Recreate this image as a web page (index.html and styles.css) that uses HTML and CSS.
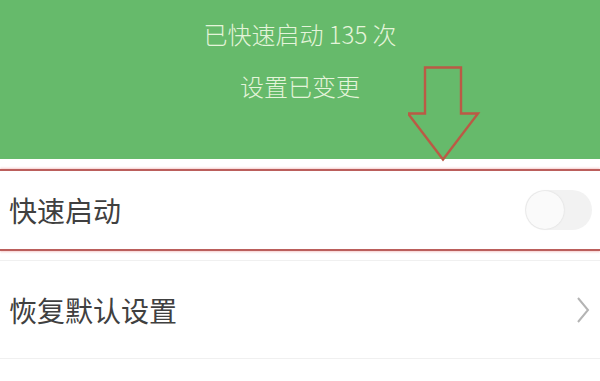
FILE: index.html
```html
<!DOCTYPE html>
<html lang="zh">
<head>
<meta charset="utf-8">
<link rel="stylesheet" href="styles.css">
</head>
<body>
<div class="screen">
  <header class="banner">
    <p class="line1">已快速启动 135 次</p>
    <p class="line2">设置已变更</p>
  </header>
  <div class="spacer"></div>
  <div class="row highlight">
    <span class="label">快速启动</span>
    <span class="toggle"><span class="knob"></span></span>
  </div>
  <div class="spacer small"></div>
  <div class="row plain">
    <span class="label">恢复默认设置</span>
    <svg class="chevron" width="14" height="28" viewBox="0 0 14 28"><path d="M2 2 L12 14 L2 26" fill="none" stroke="#b4b4b4" stroke-width="2"/></svg>
  </div>
  <svg class="arrow" width="80" height="100" viewBox="0 0 80 100">
    <path d="M17 1.5 H53 V47.5 H70 L35 93.5 L0 47.5 H17 Z" fill="none" stroke="#bb5a45" stroke-width="2.4" stroke-linejoin="miter"/>
  </svg>
</div>
</body>
</html>
```

FILE: styles.css
```css
html, body {
  margin: 0;
  padding: 0;
  background: #ffffff;
}
.screen {
  position: relative;
  width: 600px;
  height: 381px;
  overflow: hidden;
  font-family: "Noto Sans CJK SC", "Noto Sans", sans-serif;
}
.banner {
  height: 159px;
  background: #66ba6b;
  display: flex;
  flex-direction: column;
  align-items: center;
  color: #e4f4da;
  font-size: 24px;
  font-weight: 300;
}
.banner p {
  margin: 0;
  line-height: 1;
}
.line1 {
  padding-top: 22px;
}
.line2 {
  padding-top: 28px;
}
.spacer {
  height: 10px;
}
.spacer.small {
  height: 9px;
}
.row {
  display: flex;
  align-items: center;
  justify-content: space-between;
  padding: 0 8px 0 9px;
  color: #404040;
  font-size: 28px;
}
.highlight {
  height: 78px;
  border-top: 2px solid #bb5f5c;
  border-bottom: 2px solid #bb5f5c;
  box-shadow: 0 -1px 2px rgba(230, 120, 120, 0.35), 0 1px 2px rgba(230, 120, 120, 0.35);
}
.plain {
  height: 97px;
  border-top: 1px solid #f0f0f0;
  border-bottom: 1px solid #f0f0f0;
  padding-right: 10px;
}
.label {
  line-height: 1;
}
.toggle {
  width: 67px;
  height: 40px;
  border-radius: 20px;
  background: #f2f2f2;
  display: flex;
  align-items: center;
  padding-left: 1px;
  box-sizing: border-box;
}
.knob {
  width: 38px;
  height: 38px;
  border-radius: 50%;
  background: #fafafa;
  box-shadow: 0 0 2px rgba(0, 0, 0, 0.12);
}
.chevron {
  display: block;
}
.arrow {
  position: absolute;
  left: 408px;
  top: 66px;
}
```
